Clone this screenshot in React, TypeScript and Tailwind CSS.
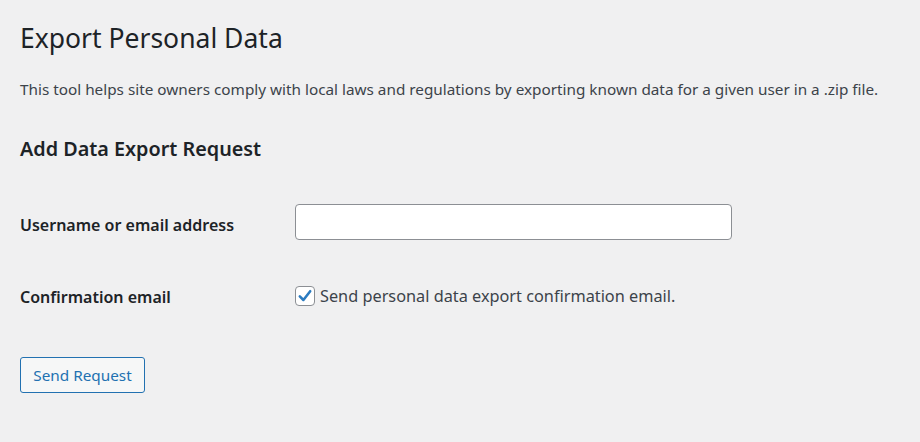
import React from "react";

export default function App() {
  return (
    <div
      className="min-h-[442px] w-full bg-[#f0f0f1] px-5 text-[#3c434a]"
      style={{ fontFamily: '"Noto Sans", "Open Sans", sans-serif' }}
    >
      <h1 className="pt-5 text-[26.5px] leading-[36px] font-normal text-[#1d2327]">
        Export Personal Data
      </h1>
      <p className="mt-[23px] text-[15.3px] leading-[20px]">
        This tool helps site owners comply with local laws and regulations by exporting known data for a given user in a .zip file.
      </p>
      <h2 className="mt-[37px] text-[19.8px] leading-[26px] font-semibold text-[#1d2327]">
        Add Data Export Request
      </h2>
      <div className="mt-[42px] grid grid-cols-[275px_1fr] items-center">
        <label className="pt-[5px] text-[16px] leading-[22px] font-semibold text-[#1d2327]">
          Username or email address
        </label>
        <input
          type="text"
          className="h-[36px] w-[437px] rounded-[4px] border border-[#8c8f94] bg-white px-2 outline-none"
        />
      </div>
      <div className="mt-[44px] grid grid-cols-[275px_1fr] items-center">
        <div className="pt-[2px] text-[16px] leading-[22px] font-semibold text-[#1d2327]">
          Confirmation email
        </div>
        <div className="flex items-center gap-[5px]">
          <span className="flex h-[20px] w-[20px] items-center justify-center rounded-[4px] border border-[#8c8f94] bg-white">
            <svg width="16" height="16" viewBox="0 0 20 20">
              <path
                d="M3.5 10.5 L8 15 L16.5 4"
                fill="none"
                stroke="#2b7bc0"
                strokeWidth="3.2"
                strokeLinecap="round"
                strokeLinejoin="round"
              />
            </svg>
          </span>
          <span className="text-[16.3px] leading-[22px]">
            Send personal data export confirmation email.
          </span>
        </div>
      </div>
      <button className="mt-[49px] flex h-[36px] w-[125px] items-center justify-center rounded-[3px] border border-[#2271b1] bg-[#f6f7f7] text-[15.3px] text-[#2271b1]">
        Send Request
      </button>
    </div>
  );
}
